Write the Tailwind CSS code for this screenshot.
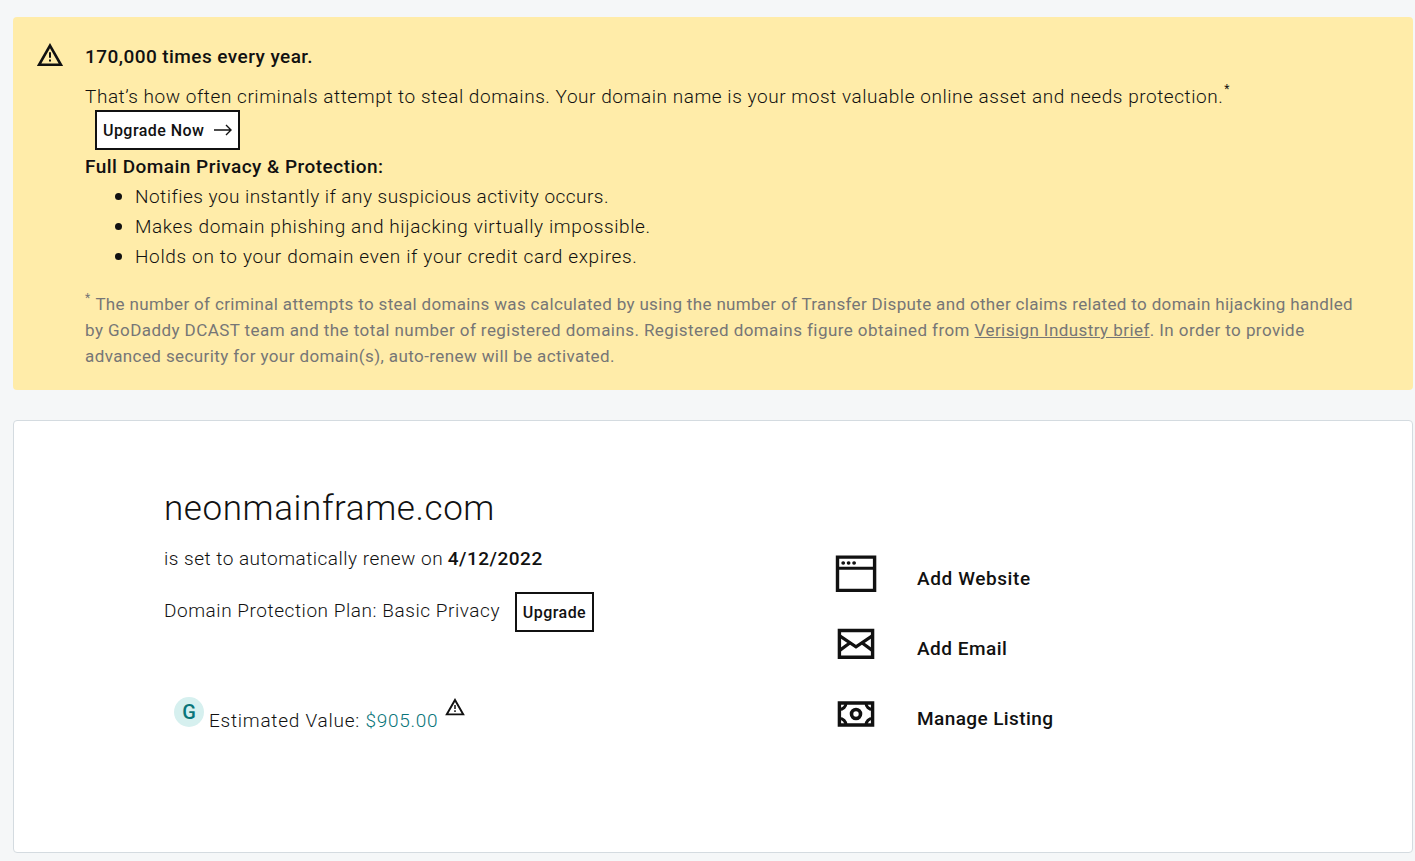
<!DOCTYPE html>
<html lang="en">

<head>
    <meta charset="UTF-8" />
    <meta name="viewport" content="width=device-width, initial-scale=1.0" />
    <title>Domain Settings</title>
    <script src="https://cdn.jsdelivr.net/npm/@tailwindcss/browser@4"></script>
</head>

<body class="bg-[#f5f7f8] h-[861px] overflow-hidden pl-[13px] pt-[17px] pr-[2px] font-['Roboto',sans-serif] text-[#111] text-[19px] font-light">
    <!-- Warning banner -->
    <section class="flex h-[373px] rounded-[4px] bg-[#ffeca9] pl-6 pt-[26px]">
        <svg class="w-[26px] h-[24px] shrink-0" viewBox="0 0 26 24" fill="none" stroke="#111">
            <path d="M13 2.6 L23.9 21.8 H2.1 Z" stroke-width="2.6" />
            <path d="M13 9.3v5.4M13 16.4v2.2" stroke-width="2" />
        </svg>
        <div class="ml-[22px] -mt-px w-[1290px] leading-[30px]">
            <p class="font-medium leading-[30px]"><span class="tracking-[0.44px]">170,000 times every year.</span></p>
            <p class="mt-[10px] h-[30px] whitespace-nowrap"><span class="tracking-[0.55px]">That’s how often criminals attempt to steal domains. Your domain name is your most valuable online asset and needs protection.</span><sup class="ml-px text-[12px] font-normal leading-none -top-[10px]">*</sup></p>
            <button class="ml-[10px] -mt-[2px] flex h-10 w-[145px] items-center border-2 border-[#111] bg-white pl-[6px] text-[16px] font-medium leading-none">
                <span class="pt-[2px] tracking-[0.45px]">Upgrade Now</span>
                <svg class="ml-auto mr-[6px] h-3 w-[18px]" viewBox="0 0 18 12" fill="none" stroke="#111" stroke-width="1.4">
                    <path d="M0 6h17M12 1l5 5-5 5" />
                </svg>
            </button>
            <p class="mt-[2px] font-medium"><span class="tracking-[0.48px]">Full Domain Privacy &amp; Protection:</span></p>
            <ul class="-mt-px list-disc pl-[50px] marker:text-[22px]">
                <li class="h-[30px]"><span class="tracking-[0.47px]">Notifies you instantly if any suspicious activity occurs.</span></li>
                <li class="h-[30px]"><span class="tracking-[0.61px]">Makes domain phishing and hijacking virtually impossible.</span></li>
                <li class="h-[30px]"><span class="tracking-[0.65px]">Holds on to your domain even if your credit card expires.</span></li>
            </ul>
            <p class="mt-5 whitespace-nowrap text-[17px] font-normal leading-[26px] text-[#767676]">
                <sup class="text-[12px] leading-none -top-[8px]">*</sup> <span class="ml-px tracking-[0.34px]">The number of criminal attempts to steal domains was calculated by using the number of Transfer Dispute and other claims related to domain hijacking handled</span><br>
                <span class="tracking-[0.43px]">by GoDaddy DCAST team and the total number of registered domains. Registered domains figure obtained from <a class="underline" href="#">Verisign Industry brief</a>. In order to provide</span><br>
                <span class="tracking-[0.4px]">advanced security for your domain(s), auto-renew will be activated.</span>
            </p>
        </div>
    </section>

    <!-- Domain card -->
    <section class="mt-[30px] flex h-[433px] rounded-[4px] border border-[#d4dbe0] bg-white pl-[150px] pt-[66px]">
        <div class="w-[670px]">
            <h1 class="text-[35px] leading-[44px]"><span class="tracking-[0.6px]">neonmainframe.com</span></h1>
            <p class="mt-[13px] leading-[30px]"><span class="tracking-[0.5px]">is set to automatically renew on</span> <b class="font-medium tracking-[0.5px]">4/12/2022</b></p>
            <div class="mt-[18px] flex h-10">
                <p class="w-[351px] leading-[38px]"><span class="tracking-[0.55px]">Domain Protection Plan: Basic Privacy</span></p>
                <button class="h-10 w-[79px] border-2 border-[#111] pt-[2px] text-[16px] font-medium leading-none"><span class="tracking-[0.45px]">Upgrade</span></button>
            </div>
            <div class="mt-[65px] flex pl-[10px]">
                <span class="flex size-[30px] items-center justify-center rounded-full bg-[#d6f0ef] text-[20px] font-medium text-[#09757a]">G</span>
                <p class="ml-[5px] w-[236px] pt-[9px] leading-[30px]"><span class="tracking-[0.75px]">Estimated Value: <span class="text-[#09757a]">$905.00</span></span></p>
                <svg class="mt-px -ml-[0.5px] w-[20px] h-[18px]" viewBox="0 0 26 24" fill="none" stroke="#111">
                    <path d="M13 2.6 L23.9 21.8 H2.1 Z" stroke-width="2.6" />
                    <path d="M13 9.3v5.4M13 16.4v2.2" stroke-width="2" />
                </svg>
            </div>
        </div>

        <!-- Quick actions -->
        <ul class="pt-[68px] font-medium">
            <li class="flex h-[70px]">
                <svg class="w-[44px] h-[38px] shrink-0" viewBox="0 0 44 38" fill="none" stroke="#111">
                    <path d="M3.5 2.1h37.1v33.3H3.5z" stroke-width="3.4" />
                    <path d="M3.5 13.3h37.1" stroke-width="3" />
                    <path d="M9.1 8h.2M14.5 8h.2M20 8h.2" stroke-width="3.6" stroke-linecap="round" />
                </svg>
                <span class="ml-[39px] pt-[9px] leading-[30px] tracking-[0.6px]">Add Website</span>
            </li>
            <li class="flex h-[70px]">
                <svg class="w-[44px] h-[38px] shrink-0" viewBox="0 0 44 38" fill="none" stroke="#111" stroke-width="3.2">
                    <path d="M5.4 5.5h33.2v26.8H5.4z" stroke-width="3.4" />
                    <path d="M5.4 10.6L22 21.8l16.6-11.2M5.4 25.6l10-7.4M38.6 25.6l-10-7.4" />
                </svg>
                <span class="ml-[39px] pt-[9px] leading-[30px] tracking-[0.5px]">Add Email</span>
            </li>
            <li class="flex h-[70px]">
                <svg class="w-[44px] h-[38px] shrink-0" viewBox="0 0 44 38" fill="none" stroke="#111" stroke-width="3">
                    <path d="M5.4 8h33.2v22H5.4z" stroke-width="3.4" />
                    <path d="M12 8a6.6 6.6 0 0 1-6.6 6.6M32 8a6.6 6.6 0 0 0 6.6 6.6M12 30a6.6 6.6 0 0 0-6.6-6.6M32 30a6.6 6.6 0 0 1 6.6-6.6" />
                    <circle cx="22" cy="19" r="4.5" stroke-width="3.6" />
                </svg>
                <span class="ml-[39px] pt-[9px] leading-[30px] tracking-[0.4px]">Manage Listing</span>
            </li>
        </ul>
    </section>
</body>

</html>
